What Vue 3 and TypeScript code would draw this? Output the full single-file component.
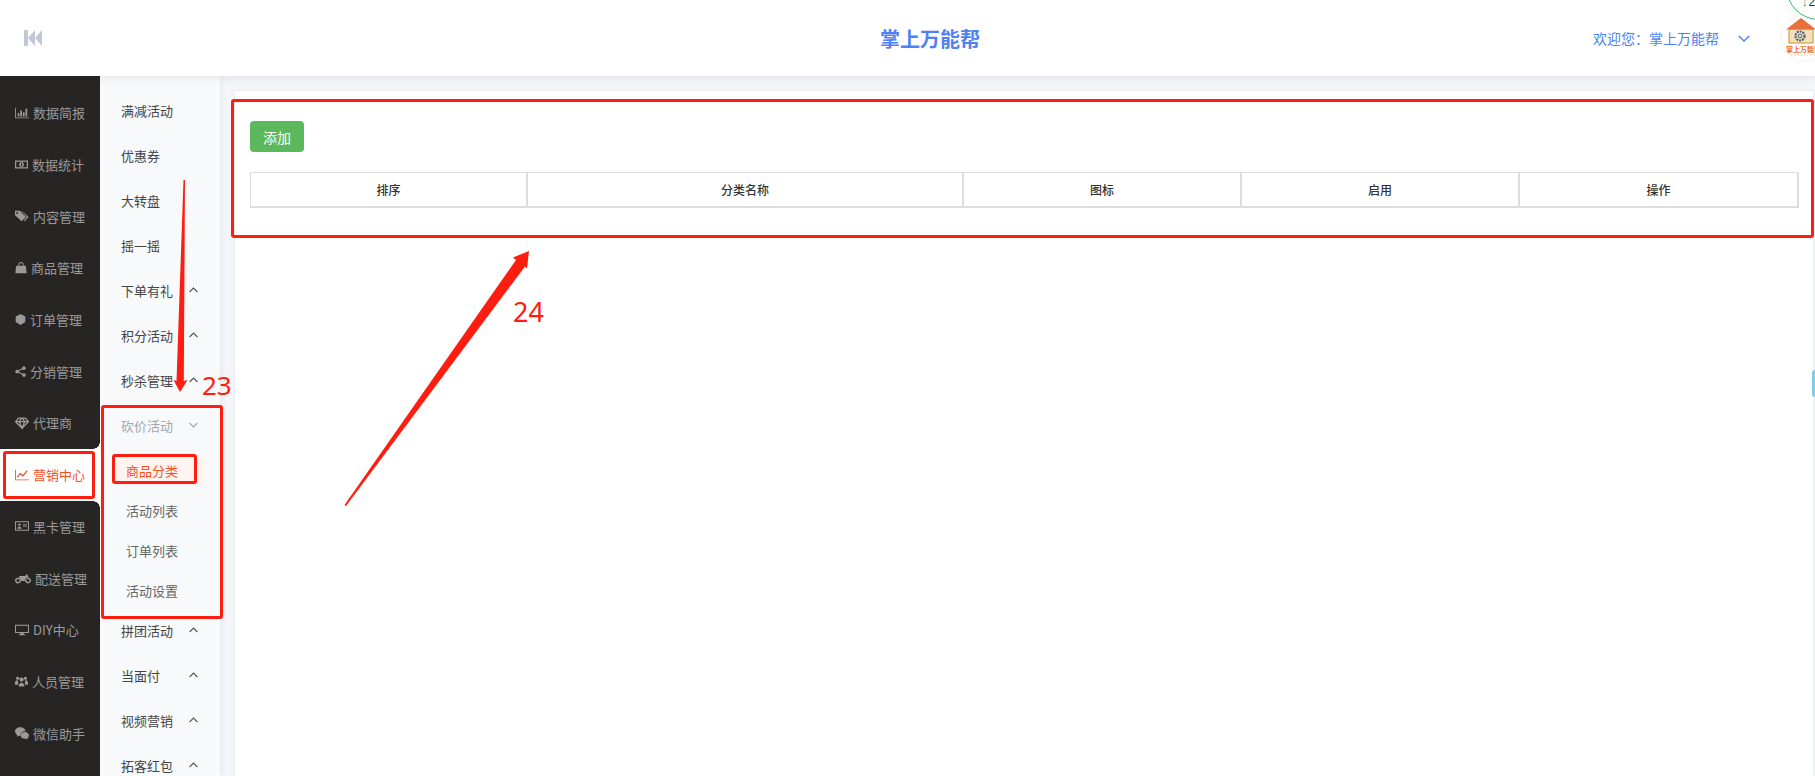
<script setup lang="ts">
interface RailItem { label: string; w: number; d?: string; s?: string; active?: boolean }
interface SubItem { label: string; active?: boolean }
interface NavItem { label: string; arrow?: 'up' | 'down'; open?: boolean; children?: SubItem[] }

const rail: RailItem[] = [
  { label: '数据简报', w: 14, d: 'M0 2h1v11h15v1H0z M3 8h2v4H3z M6 5h2v7H6z M9 7h2v5H9z M12 3h2v9h-2z' },
  { label: '数据统计', w: 13, d: 'M0 3h16v10H0z M1.5 4.5v7h13v-7z M8 5a3 3 0 1 0 .01 0z M7.3 6.3h1.4v3.4H7.3z' },
  { label: '内容管理', w: 14, d: 'M0 2h5.5l7 7-5 5L0 7z M2.5 3.5a1 1 0 1 0 .01 0z M7.500 2l8 7-4.500 5-1-1 3.500-4-6.500-7z' },
  { label: '商品管理', w: 12, d: 'M1.5 5h13l1 10H.5z M4.5 5V3.5a3.5 3.5 0 0 1 7 0V5h-1.2V3.5a2.3 2.3 0 0 0-4.6 0V5z' },
  { label: '订单管理', w: 11, d: 'M8 0l7 3.5v8L8 16l-7-4.5v-8z' },
  { label: '分销管理', w: 11, d: 'M13 .5a2.6 2.6 0 1 0 .01 0z M3 5.5a2.6 2.6 0 1 0 .01 0z M13 10.5a2.6 2.6 0 1 0 .01 0z', s: 'M13 3L3 8l10 5' },
  { label: '代理商', w: 14, s: 'M4 2.5h8l3.2 4L8 14 .8 6.5z M.8 6.5h14.4 M5 6.5L8 14l3-7.5L8.5 2.5h-1z' },
  { label: '营销中心', w: 14, active: true, d: 'M0 2h1v11h15v1H0z', s: 'M2.5 10.5l3.5-4 3 2.5 5-6' },
  { label: '黑卡管理', w: 14, d: 'M0 2.5h16v11H0z M1.2 3.8v8.4h13.6V3.8z M5 5a1.5 1.5 0 1 0 .01 0z M2.5 11c0-3 5-3 5 0z M9 6h4.5v1H9z M9 8.2h4.5v1H9z' },
  { label: '配送管理', w: 16, d: 'M3 7.5a3 3 0 1 0 .01 0z M3 9a1.5 1.5 0 1 0 .01 0z M13 7.5a3 3 0 1 0 .01 0z M13 9a1.5 1.5 0 1 0 .01 0z M4 6h6l2-2 1.5 3-4 4H6z' },
  { label: 'DIY中心', w: 14, d: 'M0 2h16v9.5H0z M1.2 3.2v7h13.6v-7z M6 11.5h4V13h2v1H4v-1h2z' },
  { label: '人员管理', w: 13, d: 'M3.2 2a2 2 0 1 0 .01 0z M12.8 2a2 2 0 1 0 .01 0z M8 3a2.6 2.6 0 1 0 .01 0z M0 10c0-3 2-3.5 3.5-3.5L4 12H0z M16 10c0-3-2-3.5-3.5-3.5L12 12h4z M4.5 14c0-6 7-6 7 0z' },
  { label: '微信助手', w: 14, d: 'M6 1.5c3.3 0 6 2 6 4.6-3.4-.2-6 2-5.5 5-.8.2-1.700.1-2.500-.1L2 12.300l.5-2C1 9.300 0 7.900 0 6.100 0 3.500 2.700 1.500 6 1.500z M11 6.800c2.800 0 5 1.800 5 4 0 1.300-.8 2.400-2 3.100l.4 1.600-1.800-1c-2.700.6-6.100-1-6.100-3.700 0-2.200 2.200-4 4.500-4z' },
]

const nav: NavItem[] = [
  { label: '满减活动' },
  { label: '优惠券' },
  { label: '大转盘' },
  { label: '摇一摇' },
  { label: '下单有礼', arrow: 'up' },
  { label: '积分活动', arrow: 'up' },
  { label: '秒杀管理', arrow: 'up' },
  {
    label: '砍价活动', arrow: 'down', open: true,
    children: [{ label: '商品分类', active: true }, { label: '活动列表' }, { label: '订单列表' }, { label: '活动设置' }],
  },
  { label: '拼团活动', arrow: 'up' },
  { label: '当面付', arrow: 'up' },
  { label: '视频营销', arrow: 'up' },
  { label: '拓客红包', arrow: 'up' },
]

const columns = [
  { label: '排序', w: 277 },
  { label: '分类名称', w: 436 },
  { label: '图标', w: 278 },
  { label: '启用', w: 278 },
  { label: '操作', w: 279 },
]
</script>

<template>
  <div class="page">
    <header class="topbar">
      <div class="top-left">
        <svg class="back" viewBox="0 0 18 16" width="18" height="16">
          <path d="M0 0h4v16H0zM4 8l7-8v16zM11 8l7-8v16z" fill="#c0c8d3" />
        </svg>
      </div>
      <div class="brand">掌上万能帮</div>
      <div class="top-right">
        <span class="welcome">欢迎您：掌上万能帮</span>
        <svg class="caret" viewBox="0 0 12 7" width="12" height="7">
          <path d="M.7.7L6 6l5.300-5.300" fill="none" stroke="#4e7ff5" stroke-width="1.300" />
        </svg>
        <div class="avatar">
          <svg viewBox="0 0 44 44" width="44" height="44">
            <rect x="7" y="13" width="24" height="14" fill="#f3e0bd" stroke="#d3a13f" stroke-width="1.200" />
            <path d="M4 13.500L19 2l15 11.500z" fill="#e8703a" />
            <circle cx="18" cy="20" r="4.500" fill="none" stroke="#53627c" stroke-width="2.200" stroke-dasharray="2 .9" />
            <circle cx="18" cy="20" r="1.800" fill="none" stroke="#53627c" stroke-width="1" />
            <text x="4" y="36" class="logo-text">掌上万能帮</text>
            <path d="M6 39h28" stroke="#f0a27c" stroke-width="1.200" stroke-dasharray="1.200 2" />
          </svg>
        </div>
      </div>
      <div class="speed-badge"><span class="down">↓</span><span>22</span></div>
    </header>

    <div class="body">
      <aside class="rail">
        <div v-for="item in rail" :key="item.label" class="rail-item" :class="{ active: item.active }">
          <svg class="rail-icon" viewBox="0 0 16 16" :style="{ width: item.w + 'px', height: item.w + 'px' }">
            <path v-if="item.d" :d="item.d" fill="currentColor" fill-rule="evenodd" />
            <path v-if="item.s" :d="item.s" fill="none" stroke="currentColor" stroke-width="1.500" />
          </svg>
          <span>{{ item.label }}</span>
        </div>
      </aside>

      <nav class="subnav">
        <div v-for="item in nav" :key="item.label" class="group">
          <div class="nav-row" :class="{ open: item.open }">
            <span>{{ item.label }}</span>
            <svg v-if="item.arrow" class="chev" viewBox="0 0 9 6" width="9" height="6">
              <path :d="item.arrow === 'up' ? 'M.6 5L4.500 1l3.900 4' : 'M.6 1l3.900 4 3.900-4'" fill="none" stroke="currentColor" stroke-width="1.100" />
            </svg>
          </div>
          <div v-if="item.children" class="children">
            <div v-for="c in item.children" :key="c.label" class="child">
              <span class="child-pill" :class="{ active: c.active }">{{ c.label }}</span>
            </div>
          </div>
        </div>
      </nav>

      <main class="main">
        <section class="card">
          <button class="add" type="button">添加</button>
          <table class="grid">
            <colgroup>
              <col v-for="c in columns" :key="c.label" :style="{ width: c.w + 'px' }" />
            </colgroup>
            <thead>
              <tr><th v-for="c in columns" :key="c.label">{{ c.label }}</th></tr>
            </thead>
          </table>
        </section>
        <div class="edge-tab"></div>
      </main>
    </div>

    <!-- screenshot annotations drawn over the page -->
    <div class="mark mark-rail"></div>
    <div class="mark mark-group"></div>
    <div class="mark mark-child"></div>
    <div class="mark mark-card"></div>
    <svg class="arrows" width="1815" height="776" viewBox="0 0 1815 776">
      <polygon points="183.500,180 185,180 183.800,381 187.500,380 180,392 173.500,380 176.500,381" fill="#ff1d10" />
      <polygon points="344.500,505 346,506 525,266.500 527,268.500 529,251 513,257.500 516,260" fill="#ff1d10" />
    </svg>
    <span class="num num-23">23</span>
    <span class="num num-24">24</span>
  </div>
</template>

<style>
html, body { margin: 0; overflow: hidden; background: #fff; }
</style>

<style scoped>
.page {
  position: relative;
  width: 1815px;
  height: 776px;
  overflow: hidden;
  font-family: "Noto Sans CJK SC", "Liberation Sans", sans-serif;
  font-size: 13px;
  color: #333;
  display: flex;
  flex-direction: column;
}
.topbar {
  position: relative;
  z-index: 3;
  flex: 0 0 76px;
  display: flex;
  align-items: center;
  background: #fff;
  box-shadow: 0 2px 8px rgba(0, 0, 0, 0.08);
  padding-left: 24px;
}
.top-left { width: 243px; display: flex; align-items: center; }
.brand { flex: 1; text-align: center; font-size: 20px; font-weight: 700; color: #4e80f6; }
.top-right { display: flex; align-items: center; flex: 0 0 222px; min-width: 0; }
.welcome { flex: none; font-size: 14px; color: #4e7ff5; white-space: nowrap; }
.caret { flex: none; margin-left: 19px; }
.avatar {
  flex: none;
  margin-left: 32px;
  width: 44px;
  height: 44px;
  border-radius: 50%;
  background: #fff;
  box-shadow: 0 0 5px rgba(0, 0, 0, 0.08);
  overflow: hidden;
}
.avatar svg { display: block; }
.logo-text { font-size: 7px; font-weight: 700; fill: #ee6a24; }
.speed-badge {
  position: absolute;
  left: 1786px;
  top: -46px;
  width: 66px;
  height: 66px;
  box-sizing: border-box;
  border-radius: 50%;
  border: 1.500px solid #22c466;
  background: #fff;
  box-shadow: 0 0 0 3px #fff, 0 0 5px 3px rgba(0, 0, 0, 0.08);
  padding: 0 0 11px 15px;
  display: flex;
  align-items: flex-end;
  gap: 1px;
  font-family: "Liberation Sans", sans-serif;
  font-size: 12px;
  line-height: 12px;
  color: #333;
}
.down { color: #18a34a; font-weight: 700; font-size: 11px; }
.body { flex: 1; display: flex; min-height: 0; }

.rail {
  flex: 0 0 100px;
  background: #272524;
  padding-top: 11px;
  box-sizing: border-box;
  color: #9a9a9a;
}
.rail-item {
  position: relative;
  height: 51.700px;
  display: flex;
  align-items: center;
  gap: 4px;
  padding-left: 15px;
  box-sizing: border-box;
  white-space: nowrap;
}
.rail-icon { flex: none; }
.rail-item.active { background: #fff; color: #f5511e; }
.rail-item.active::before,
.rail-item.active::after {
  content: "";
  position: absolute;
  right: 0;
  width: 7px;
  height: 7px;
}
.rail-item.active::before { top: -7px; background: radial-gradient(circle at 0 0, #272524 6.500px, #fff 7px); }
.rail-item.active::after { bottom: -7px; background: radial-gradient(circle at 0 100%, #272524 6.500px, #fff 7px); }

.subnav {
  position: relative;
  z-index: 1;
  flex: 0 0 120px;
  background: #f7f9fb;
  padding-top: 11.500px;
  box-sizing: border-box;
  box-shadow: 2px 0 6px rgba(0, 0, 0, 0.05);
}
.nav-row {
  height: 45px;
  display: flex;
  align-items: center;
  padding-left: 21px;
  padding-right: 22px;
  justify-content: space-between;
  color: #444;
}
.nav-row .chev { color: #555; }
.nav-row.open, .nav-row.open .chev { color: #a0a6ad; }
.children { margin: 3.500px 0 -3.500px; }
.child { height: 40px; display: flex; align-items: center; padding-left: 12px; }
.child-pill {
  width: 93px;
  height: 30px;
  line-height: 30px;
  padding-left: 14px;
  box-sizing: border-box;
  border-radius: 6px;
  color: #666;
}
.child-pill.active { background: #fff4ef; color: #f5511e; }

.main {
  position: relative;
  flex: 1;
  min-width: 0;
  background: #f4f5f8;
  padding: 15px 2px 0 15px;
  box-sizing: border-box;
}
.card {
  height: 100%;
  background: #fff;
  padding: 30px 15px 0;
  box-sizing: border-box;
  box-shadow: 0 0 3px rgba(0, 0, 0, 0.08);
}
.add {
  display: block;
  width: 54px;
  height: 31px;
  padding: 0;
  border: 0;
  border-radius: 4px;
  background: #5cb85c;
  color: #fff;
  font: inherit;
  font-size: 14px;
}
.grid {
  margin-top: 20px;
  width: 1548px;
  table-layout: fixed;
  border-collapse: separate;
  border-spacing: 0;
  border-left: 1px solid #ddd;
  border-top: 1px solid #ddd;
}
.grid th {
  height: 33px;
  padding: 0;
  border-right: 2px solid #ddd;
  border-bottom: 2px solid #ddd;
  font-size: 12px;
  font-weight: 500;
  color: #333;
  text-align: center;
}
.edge-tab {
  position: absolute;
  right: 0;
  top: 294px;
  width: 3px;
  height: 27px;
  background: #7dcdee;
  border-radius: 3px 0 0 3px;
}

.mark {
  position: absolute;
  z-index: 5;
  border: 3px solid #ff1d10;
  border-radius: 3px;
  box-sizing: border-box;
  pointer-events: none;
}
.mark-rail { left: 3px; top: 451px; width: 92px; height: 48px; }
.mark-group { left: 101px; top: 405px; width: 122px; height: 214px; }
.mark-child { left: 112px; top: 454px; width: 85px; height: 30px; }
.mark-card { left: 231px; top: 99px; width: 1583px; height: 139px; }
.arrows { position: absolute; left: 0; top: 0; z-index: 6; pointer-events: none; }
.num {
  position: absolute;
  z-index: 6;
  font-family: "Noto Sans", sans-serif;
  color: #ff1d10;
  line-height: 1;
}
.num-23 { left: 202px; top: 372px; font-size: 26px; }
.num-24 { left: 513px; top: 298px; font-size: 27px; }
</style>
